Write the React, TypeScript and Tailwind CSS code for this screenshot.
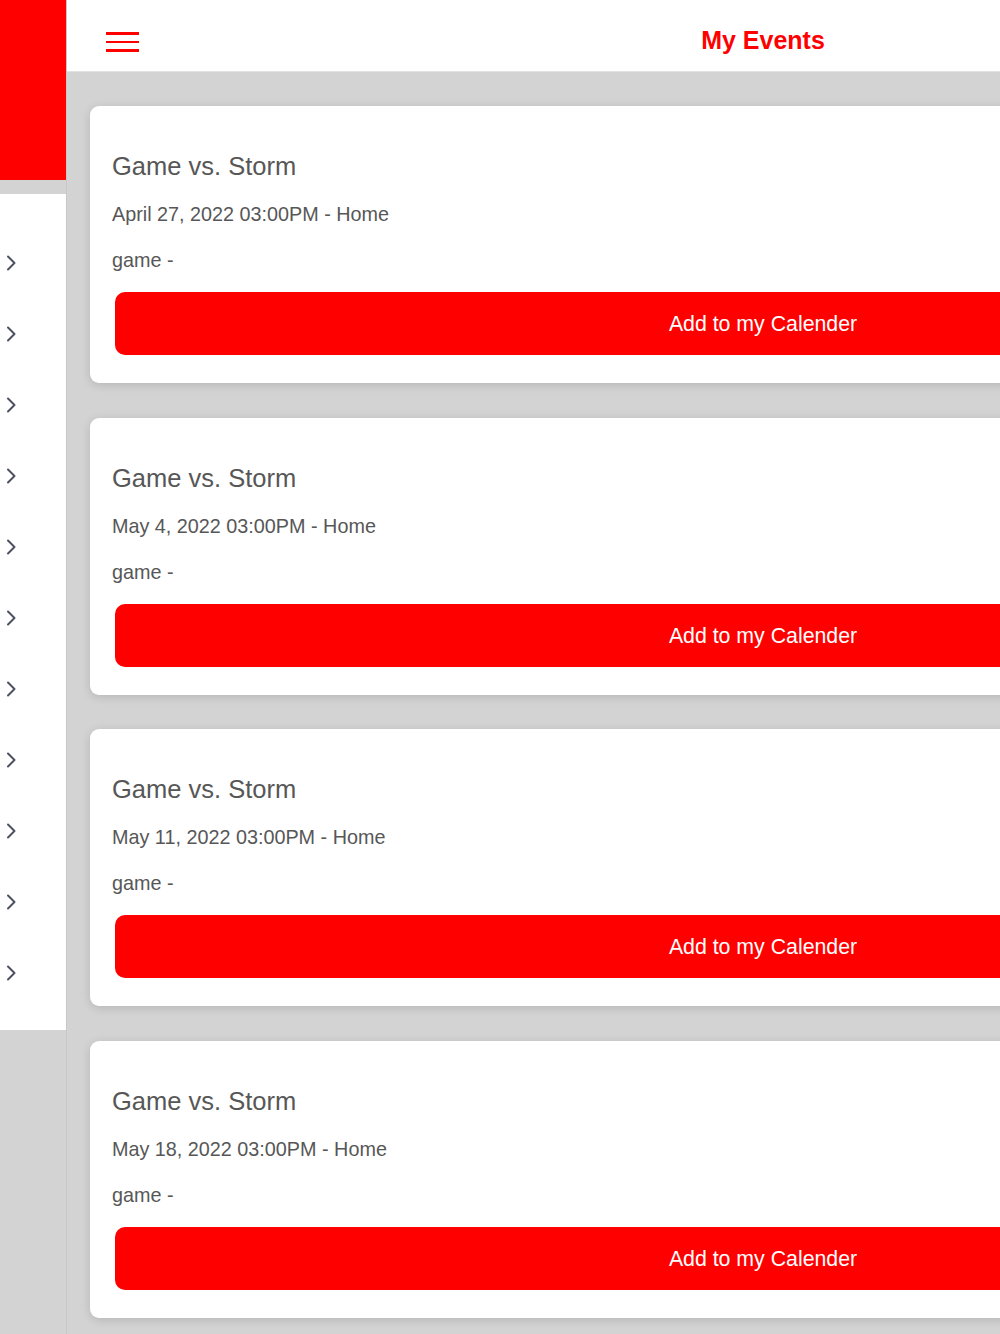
import React from "react";

const events = [
  "April 27, 2022 03:00PM - Home",
  "May 4, 2022 03:00PM - Home",
  "May 11, 2022 03:00PM - Home",
  "May 18, 2022 03:00PM - Home",
];

function Chevron() {
  return (
    <svg width="12" height="16" viewBox="0 0 12 16" fill="none">
      <path d="M3 1.5 L9.5 8 L3 14.5" stroke="#4b5161" strokeWidth="2" strokeLinecap="round" strokeLinejoin="round" />
    </svg>
  );
}

export default function App() {
  return (
    <div
      className="w-[1000px] h-[1334px] overflow-hidden flex bg-[#d3d3d3]"
      style={{ fontFamily: '"Liberation Sans", Arial, sans-serif' }}
    >
      {/* Sidebar */}
      <div className="w-[67px] shrink-0 flex flex-col border-r border-[#c8c8c8]">
        <div className="h-[180px] bg-[#ff0000]" />
        <div className="h-[14px]" />
        <div className="h-[836px] bg-white flex flex-col pt-[33px]">
          {Array.from({ length: 11 }).map((_, i) => (
            <div key={i} className="h-[71px] flex items-center pl-[5px]">
              <Chevron />
            </div>
          ))}
        </div>
      </div>

      {/* Main */}
      <div className="w-[1392px] shrink-0 flex flex-col">
        <div className="h-[72px] bg-white relative flex items-center pt-[10px] border-b border-[#e2e2e2]">
          <div className="absolute left-[39px] top-[32px] flex flex-col gap-[6px]">
            <div className="w-[33px] h-[2.5px] bg-[#ff0000]" />
            <div className="w-[33px] h-[2.5px] bg-[#ff0000]" />
            <div className="w-[33px] h-[2.5px] bg-[#ff0000]" />
          </div>
          <div className="w-full text-center text-[25px] font-bold text-[#ff0000]">My Events</div>
        </div>
        <div className="flex flex-col gap-[34.7px] pt-[34px] px-[23px]">
          {events.map((d, i) => (
            <div
              key={i}
              className="bg-white rounded-[9px] shadow-[0_2px_10px_rgba(0,0,0,0.14)] pt-[45px] pb-[28px] h-[277px]"
            >
              <div className="pl-[22px] text-[25.5px] leading-[30px] text-[#575757]">Game vs. Storm</div>
              <div className="pl-[22px] mt-[21px] text-[19.8px] leading-[24px] text-[#575757]">{d}</div>
              <div className="pl-[22px] mt-[22px] text-[19.8px] leading-[24px] text-[#575757]">game -</div>
              <div className="mx-[25px] mt-[20px] h-[63px] pt-[3px] rounded-[10px] bg-[#ff0000] flex items-center justify-center text-white text-[21.3px]">
                Add to my Calender
              </div>
            </div>
          ))}
        </div>
      </div>
    </div>
  );
}
